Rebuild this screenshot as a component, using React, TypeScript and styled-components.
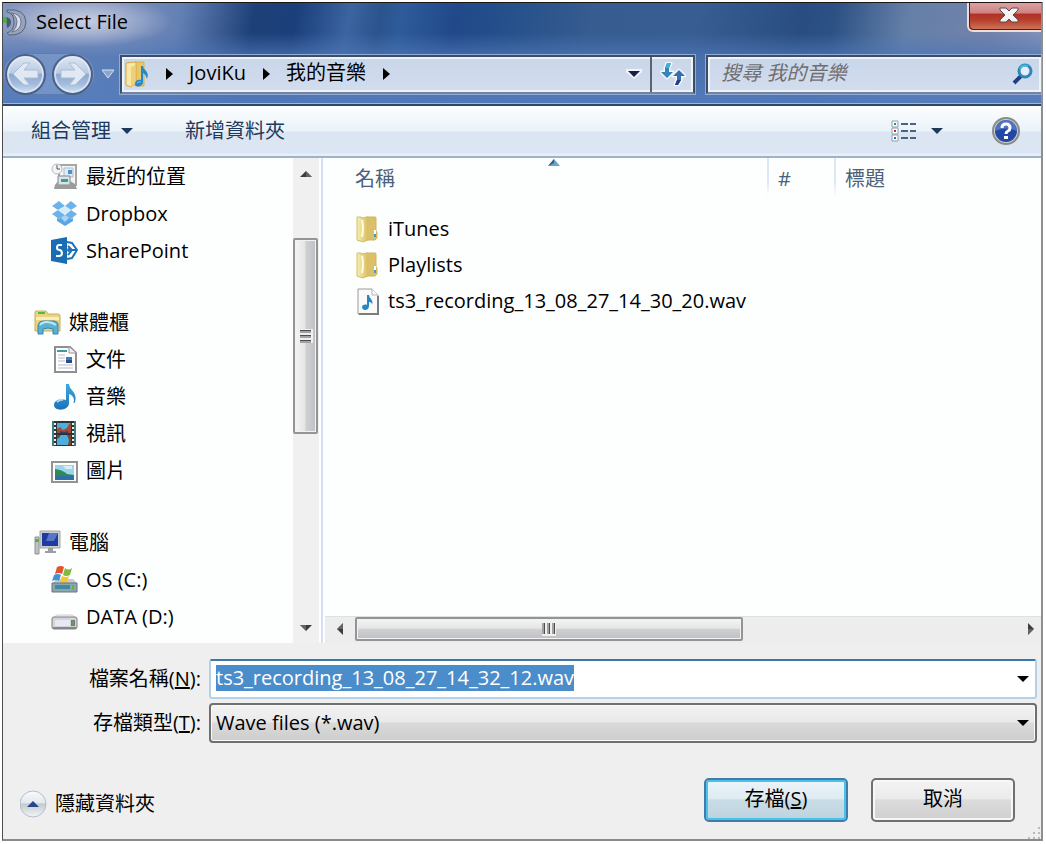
import React, { useEffect, useRef } from "react";
import styled, { createGlobalStyle, css } from "styled-components";

const GlobalStyle = createGlobalStyle`
  *, *::before, *::after { box-sizing: border-box; }
  body { margin: 0; background: #fff; }
  body, button, input, select {
    font-family: "Open Sans", "Noto Sans CJK TC", sans-serif;
    font-size: 20px;
    line-height: 26px;
    color: #000;
  }
  button { padding: 0; border: 0; background: none; cursor: default; }
`;

/* ---------- window frame ---------- */

const Page = styled.div`
  min-height: 100vh;
  display: flex;
  padding: 2px 3px 3px 2px;
`;

const Window = styled.div`
  flex: 1;
  min-width: 0;
  display: flex;
  flex-direction: column;
  border: solid;
  border-width: 1px 2px 2px 1px;
  border-color: #1c1512 #8f8f8f #8a8a8a #4c4c4c;
  background: #efefef;
`;

const Glass = styled.header`
  border-bottom: 2px solid #2d4764;
  padding-bottom: 9px;
  background:
    radial-gradient(ellipse 90px 26px at 80px 18px, rgba(225, 228, 240, 0.75), rgba(190, 200, 225, 0) 100%),
    linear-gradient(180deg, rgba(84, 124, 187, 0) 30px, rgba(78, 118, 182, 0.75) 54px, rgba(84, 124, 187, 0.95) 100%),
    linear-gradient(100deg,
      #8294bd 0, #7f92bc 10%, #6380b4 17%, #1d4078 24%, #1b3f7a 28%, #3b64a1 33%, #2b548d 36%,
      #2e5b9a 38%, #21498a 43%, #25508a 48%, #365c90 56%, #375d92 66%, #294d80 76%, #2c5184 79%,
      #6580a8 86%, #7282aa 94%, #8394bb 100%);
  box-shadow: inset 0 -1px 0 #9db8dd;
`;

const TitleBar = styled.div`
  height: 50px;
  display: flex;
  align-items: flex-start;
  gap: 9px;
`;

const Title = styled.h1`
  flex: 1;
  margin: 5px 0 0;
  font-size: 20px;
  line-height: 28px;
  font-weight: 400;
`;

const AppLogo = styled.svg`
  width: 24px;
  height: 28px;
  margin-top: 5px;
`;

const CloseButton = styled.button`
  width: 74px;
  height: 29px;
  padding: 0 0 4px 8px;
  border: 2px solid #f0dcdc;
  border-top: 0;
  border-right: 0;
  border-radius: 0 0 0 6px;
  background: linear-gradient(#dba3a3 0, #cf8080 38%, #b03025 40%, #b8412f 65%, #d07a5c 100%);
  box-shadow: inset 1px -1px 0 #5c1a1a;
  display: flex;
  justify-content: center;
  align-items: center;
`;

const NavRow = styled.div`
  display: flex;
  align-items: center;
  height: 42px;
`;

const NavButtons = styled.div`
  display: flex;
  align-items: center;
  gap: 6px;
  height: 42px;
  padding: 0 2px;
  border-radius: 21px;
  background: rgba(150, 175, 215, 0.45);
  box-shadow: inset 0 0 0 1px rgba(70, 100, 150, 0.5);
`;

const RoundButton = styled.button`
  width: 41px;
  height: 41px;
  border-radius: 50%;
  border: 2px solid #4a6287;
  background: linear-gradient(#dfe7f2 0, #b9cae2 46%, #8fa9cf 50%, #a2bbdd 75%, #cfe0f2 100%);
  box-shadow: inset 0 0 0 2px rgba(225, 235, 248, 0.75);
  display: flex;
  align-items: center;
  justify-content: center;
`;

const HistoryButton = styled.button`
  width: 25px;
  height: 38px;
  display: flex;
  align-items: center;
  justify-content: center;
`;

const glassBox = css`
  height: 39px;
  display: flex;
  align-items: stretch;
  border: 2px solid #3d4d66;
  border-bottom-color: #74839f;
  background: linear-gradient(#c9d6e9, #d2ddee);
  box-shadow: 0 0 0 1px #8fabd6, inset 0 0 0 2px #eef3fa;
`;

const AddressBar = styled.nav`
  ${glassBox}
  flex: 577;
  min-width: 0;
`;

const Crumbs = styled.div`
  flex: 1;
  min-width: 0;
  display: flex;
  align-items: center;
  padding-left: 3px;
  white-space: nowrap;
`;

const CrumbLink = styled.a`
  color: #000;
  text-decoration: none;
  margin-bottom: 2px;
`;

const CrumbArrow = styled.svg`
  width: 8px;
  height: 12px;
  margin: 0 16px;
  flex: none;
`;

const BarButton = styled.button<{ $width: number; $divided?: boolean }>`
  width: ${(p) => p.$width}px;
  border-left: ${(p) => (p.$divided ? "2px solid #5b6270" : "0")};
  display: flex;
  align-items: center;
  justify-content: center;
`;

const SearchBox = styled.form`
  ${glassBox}
  flex: 336;
  min-width: 0;
  margin-left: 11px;
  border-right-width: 0;
`;

const SearchInput = styled.input`
  flex: 1;
  min-width: 0;
  border: 0;
  outline: 0;
  padding: 0 0 2px 13px;
  background: none;
  &::placeholder {
    color: #6e6e70;
    opacity: 1;
    font-style: italic;
  }
`;

/* ---------- command bar ---------- */

const CommandBar = styled.div`
  height: 52px;
  display: flex;
  align-items: center;
  padding: 0 21px 0 28px;
  border-bottom: 2px solid #a0b1c9;
  background: linear-gradient(#fcfeff 0, #eaf2f9 50%, #dce6f2 52%, #dce6f3 94%, #e4f0f8 96%);
`;

const Command = styled.button<{ $gap?: number }>`
  display: flex;
  align-items: center;
  gap: 8px;
  color: #1e395b;
  margin-right: ${(p) => p.$gap ?? 0}px;
`;

const Spacer = styled.div`
  flex: 1;
`;

/* ---------- body ---------- */

const Body = styled.main`
  flex: 1;
  display: flex;
  min-height: 0;
  background: #fdfefe;
`;

const Sidebar = styled.nav`
  width: 290px;
  flex: none;
`;

const Group = styled.ul`
  list-style: none;
  margin: 0 0 35px;
  padding: 0;
  &:last-child {
    margin-bottom: 0;
  }
`;

const Place = styled.a<{ $root?: boolean }>`
  height: 37px;
  display: flex;
  align-items: center;
  gap: 8px;
  padding-left: ${(p) => (p.$root ? 31 : 48)}px;
  color: #000;
  text-decoration: none;
`;

const Icon = styled.svg`
  width: 27px;
  height: 27px;
  flex: none;
`;

const ScrollTrack = styled.div<{ $horizontal?: boolean }>`
  display: flex;
  flex-direction: ${(p) => (p.$horizontal ? "row" : "column")};
  flex: none;
  background: ${(p) => (p.$horizontal ? "#ededed" : "#f0f0f0")};
  ${(p) =>
    p.$horizontal
      ? "height: 27px; padding-bottom: 2px; border-top: 1px solid #e0e0e0;"
      : "width: 26px; padding-right: 1px;"}
`;

const ScrollArrow = styled.button<{ $size: number }>`
  flex: 0 0 ${(p) => p.$size}px;
  display: flex;
  align-items: center;
  justify-content: center;
`;

const Gap = styled.div<{ $grow: number }>`
  flex: ${(p) => p.$grow} 1 0;
`;

const Thumb = styled.div<{ $grow: number; $horizontal?: boolean }>`
  flex: ${(p) => p.$grow} 1 0;
  border: 2px solid #949494;
  border-radius: 2px;
  box-shadow: inset 0 0 0 1px #f2f2f2;
  display: flex;
  align-items: center;
  justify-content: center;
  background: linear-gradient(
    ${(p) => (p.$horizontal ? "180deg" : "90deg")},
    #f4f4f4 0,
    #e6e6e7 46%,
    #cfd0d2 52%,
    #bfc0c5 100%
  );
`;

const Files = styled.section`
  flex: 1;
  min-width: 0;
  display: flex;
  flex-direction: column;
  border-left: 2px solid #d3e0f3;
  margin-left: 2px;
  padding-left: 2px;
`;

const FileArea = styled.div`
  flex: 1;
  padding-left: 16px;
`;

const FileTable = styled.table`
  width: 100%;
  table-layout: fixed;
  border-collapse: collapse;
`;

const HeadCell = styled.th<{ $width?: number; $first?: boolean }>`
  position: relative;
  width: ${(p) => (p.$width ? `${p.$width}px` : "auto")};
  height: 42px;
  padding: 0 0 0 ${(p) => (p.$first ? 14 : 11)}px;
  font-weight: 400;
  text-align: left;
  color: #4c607a;
  background: ${(p) =>
    p.$first ? "none" : "linear-gradient(#dce6f5, #dce6f5 60%, #fdfefe) 0 0 / 2px 38px no-repeat"};
`;

const SortMark = styled.svg`
  position: absolute;
  top: 1px;
  left: 50%;
  width: 12px;
  height: 7px;
  margin-left: -6px;
`;

const FileCell = styled.td`
  height: 36px;
  padding: 0 0 0 15px;
`;

const FileName = styled.div`
  display: flex;
  align-items: center;
  gap: 5px;
`;

const HeadGap = styled.tr`
  height: 11px;
`;

/* ---------- footer ---------- */

const Footer = styled.footer`
  padding: 16px 4px 17px 0;
`;

const Fields = styled.div`
  display: grid;
  grid-template-columns: 198px 1fr;
  column-gap: 8px;
  row-gap: 4px;
  align-items: center;
`;

const FieldLabel = styled.label`
  text-align: right;
  white-space: nowrap;
`;

const Combo = styled.div`
  height: 40px;
  display: flex;
  border: 2px solid #b5d1e8;
  border-top-color: #3d78ab;
  border-radius: 3px;
  background: #fff;
`;

const NameInput = styled.input`
  flex: 1;
  min-width: 0;
  border: 0;
  outline: 0;
  padding: 0 0 2px 5px;
  background: none;
  &::selection {
    background: #4b8dca;
    color: #fff;
  }
`;

const SelectWrap = styled.div`
  display: grid;
  align-items: center;
  & > * {
    grid-area: 1 / 1;
  }
  & > svg {
    justify-self: end;
    margin-right: 6px;
    pointer-events: none;
  }
`;

const TypeSelect = styled.select`
  appearance: none;
  width: 100%;
  height: 40px;
  padding: 0 28px 0 5px;
  border: 2px solid #6f6f6f;
  border-radius: 4px;
  box-shadow: inset 0 0 0 1px #fafafa;
  background: linear-gradient(#f3f3f3 0, #e9e9e9 47%, #dadada 50%, #cdcdcd 100%);
`;

const ComboButton = styled.button`
  width: 24px;
  display: flex;
  align-items: center;
  justify-content: center;
`;

const Actions = styled.div`
  display: flex;
  align-items: center;
  gap: 23px;
  padding: 35px 22px 0 17px;
`;

const HideFolders = styled.button`
  display: flex;
  align-items: center;
  gap: 8px;
  margin-top: 8px;
`;

const PushButton = styled.button<{ $primary?: boolean }>`
  width: 144px;
  height: 44px;
  padding-bottom: 2px;
  border: 2px solid ${(p) => (p.$primary ? "#3f7cac" : "#707070")};
  border-radius: 5px;
  box-shadow: inset 0 0 0 2px ${(p) => (p.$primary ? "#48c2e6" : "#f7f7f7")};
  background: ${(p) =>
    p.$primary
      ? "linear-gradient(#ecf4f9 0, #dfebf2 46%, #c9dce6 50%, #bdd3df 100%)"
      : "linear-gradient(#f3f3f3 0, #ebebeb 46%, #dcdcdc 50%, #cfcfcf 100%)"};
`;

const Resize = styled.svg`
  position: absolute;
  right: 5px;
  bottom: 5px;
  width: 14px;
  height: 12px;
`;

/* ---------- drawings ---------- */

const Down = ({ fill = "#000", halo = false }: { fill?: string; halo?: boolean }) => (
  <svg width="16" height="10" viewBox="0 0 16 10" aria-hidden="true">
    {halo && <path d="M0 0h16v3l-8 7-8-7z" fill="#f1f5fb" />}
    <path d="M2 2h12l-6 6z" fill={fill} />
  </svg>
);

const ScrollTip = ({ turn }: { turn: number }) => (
  <svg width="12" height="12" viewBox="0 0 12 12" aria-hidden="true">
    <g transform={`rotate(${turn} 6 6)`}>
      <path d="M0 9l6-6 6 6z" fill="#3c3c3c" />
      <path d="M6 3l6 6H6z" fill="#8a8a8a" opacity="0.5" />
    </g>
  </svg>
);

const Grip = ({ vertical }: { vertical?: boolean }) => (
  <svg width="14" height="14" viewBox="0 0 14 14" aria-hidden="true">
    <g transform={vertical ? "rotate(90 7 7)" : undefined}>
      <path d="M0 0h14v14H0z" fill="#f0f0f0" />
      <path d="M1 1h11v3H1zM1 6h11v3H1zM1 11h11v3H1z" fill="#a2a2a2" />
      <path d="M1 1h11v1H1zM1 6h11v1H1zM1 11h11v1H1z" fill="#4e4e4e" />
    </g>
  </svg>
);

const NavArrow = ({ flip }: { flip?: boolean }) => (
  <svg width="30" height="26" viewBox="0 0 30 26" aria-hidden="true">
    <path
      transform={flip ? "matrix(-1 0 0 1 30 0)" : undefined}
      d="M2 13L13 2h6l-6 7h14v8H13l6 7h-6z"
      fill="#dfe8f3"
      stroke="#a9bcd8"
    />
  </svg>
);

const FolderIcon = () => (
  <Icon viewBox="0 0 27 27" aria-hidden="true">
    <defs>
      <linearGradient id="fold" x1="0" x2="1">
        <stop offset="0" stopColor="#f8f0b4" />
        <stop offset="1" stopColor="#d9bd5f" />
      </linearGradient>
    </defs>
    <path d="M10 1h9q1 0 1 1v13l1 1v6l-2 2h-9z" fill="#dcc069" stroke="#d0b55c" />
    <path d="M1 1h6v24H1z" fill="#ecdc8c" />
    <path d="M5 2l7-1v23l-5 2-6-2V1h4z" fill="url(#fold)" stroke="#d6be68" />
    <path d="M6 4q2 8 0 17" fill="none" stroke="#fffbe0" strokeWidth="2" />
    <path d="M18 14h2v6h-2z" fill="#fff" />
    <path d="M18 18h2v3h-2z" fill="#3c9bd3" />
  </Icon>
);

const MusicFolder = () => (
  <svg width="24" height="27" viewBox="0 0 24 27" aria-hidden="true">
    <path d="M10 1h9v24h-9z" fill="#e9c765" stroke="#d8b04c" />
    <path d="M1 2l10-1v21l-5 4-5-2z" fill="#fae7a2" stroke="#cfa848" />
    <path d="M6 6l4-2v18l-4 4z" fill="#eed07c" />
    <path d="M18 5c0 4 7 5 4 13-1-3-2-5-4-6v9c0 5-8 6-8 2 0-4 4-5 6-4V5z" fill="#2788c9" />
    <path d="M12 22q2-2 4-1" fill="none" stroke="#7cc6ee" />
  </svg>
);

const AudioFile = () => (
  <Icon viewBox="0 0 27 27" aria-hidden="true">
    <path d="M2 1h14l6 6v19H2z" fill="#fafafa" stroke="#9a9a9a" />
    <path d="M3 26h19V8" fill="none" stroke="#7c7c7c" strokeWidth="2" />
    <path d="M16 1v6h6" fill="#fff" stroke="#b5b5b5" />
    <path d="M13 7c0 3 5 5 3 10 0-2-1-3-3-3v4c0 5-7 5-7 1 0-2 3-3 5-2V7z" fill="#2687c4" />
  </Icon>
);

const RecentIcon = () => (
  <Icon viewBox="0 0 27 27" aria-hidden="true">
    <path d="M8 2h17v20H8z" fill="#f4f4f4" stroke="#a6a6a6" strokeWidth="2" />
    <path d="M13 5h9v9h-9z" fill="#dcecf8" stroke="#aebdca" />
    <path d="M17 7h4v4h-4z" fill="#4a8fd0" />
    <path d="M7 13h12v9H7z" fill="#d7e5ea" stroke="#888" />
    <path d="M10 16h7v3h-7z" fill="#3b9c98" />
    <path d="M4 22l3-4v4h12v-4l5 3 2 5H3z" fill="#9b9b9b" />
    <circle cx="6" cy="6" r="5" fill="#f2f5f8" stroke="#b2bac2" />
    <path d="M6 2v4h3" fill="none" stroke="#555" />
  </Icon>
);

const DropboxIcon = () => (
  <Icon viewBox="0 0 27 27" aria-hidden="true">
    <path d="M8 1l6 5-7 4-6-4zM20 1l6 5-6 4-6-4zM7 10l7 5-6 4-7-5zM20 10l6 4-6 5-6-4z" fill="#6db3ea" />
    <path d="M14 6l6 4-6 5-7-5z" fill="#d6ecfb" />
    <path d="M6 18l2 1 6-4 6 4 2-1v3l-8 5-8-5z" fill="#5aa5e2" />
    <path d="M14 15l4 3-4 4-4-4z" fill="#a9d5f5" />
  </Icon>
);

const SharePointIcon = () => (
  <Icon viewBox="0 0 27 27" aria-hidden="true">
    <path d="M16 5l5 1 5 7-5 8-5 1" fill="#fff" stroke="#1f72b8" strokeWidth="2" />
    <path d="M17 9l4 4-4 5M18 13h7" fill="none" stroke="#1f72b8" strokeWidth="2" />
    <circle cx="18" cy="13" r="2" fill="#1f72b8" />
    <path d="M0 3L16 0v27L0 24z" fill="#1a6cb4" />
    <path d="M11 8H8q-2 0-2 3 0 2 3 2 2 1 2 3 0 3-3 3H5" fill="none" stroke="#fff" strokeWidth="2" />
  </Icon>
);

const LibraryIcon = () => (
  <Icon viewBox="0 0 27 27" aria-hidden="true">
    <path d="M1 3q0-1 1-1h10l2 3h10q2 0 2 2v15H1z" fill="#e9d485" stroke="#c9ae58" />
    <path d="M2 8h23v3H2z" fill="#f8eeb8" />
    <path d="M4 3h7v2H4z" fill="#5bb83d" />
    <path d="M4 25V16q1-4 5-4h10q5 0 5 4v9h-5v-5q-5-2-10 0v5z" fill="#58b1d8" stroke="#3385ad" />
    <path d="M6 16q2-3 7-3t9 3" fill="none" stroke="#c3e8f5" strokeWidth="2" />
  </Icon>
);

const DocumentIcon = () => (
  <Icon viewBox="0 0 27 27" aria-hidden="true">
    <path d="M4 1h15l6 6v19H4z" fill="#fff" stroke="#8f8f8f" strokeWidth="2" />
    <path d="M18 1v6h7" fill="#eee" stroke="#999" />
    <path d="M6 4h10v2H6z" fill="#3d9ba0" />
    <path d="M7 9h7M7 12h7M7 15h7M7 19h15M7 22h15" stroke="#b4b8d2" />
    <path d="M15 11h6v6h-6z" fill="#3c7dbf" />
    <path d="M15 14h6v3h-6z" fill="#244c7c" />
  </Icon>
);

const NoteIcon = () => (
  <Icon viewBox="0 0 27 27" aria-hidden="true">
    <defs>
      <linearGradient id="note" x1="0" x2="0" y1="0" y2="1">
        <stop offset="0" stopColor="#3fa9e0" />
        <stop offset="1" stopColor="#1c72b8" />
      </linearGradient>
    </defs>
    <path d="M15 1h3c0 6 9 8 6 18-1 2-2 1-1-1 0-4-2-6-5-7v9c0 8-15 9-15 2 0-5 7-7 12-5z" fill="url(#note)" />
    <path d="M6 19q3-3 6-2" stroke="#a5dcf5" strokeWidth="2" fill="none" />
  </Icon>
);

const VideoIcon = () => (
  <Icon viewBox="0 0 27 27" aria-hidden="true">
    <path d="M1 1h24v25H1z" fill="#2c3436" />
    <path d="M1 1h2v25H1zM23 1h2v25h-2z" fill="#3a7d80" />
    <path d="M4 3v22M22 3v22" stroke="#e9eeee" strokeWidth="2" strokeDasharray="2 2" />
    <path d="M6 3h14v10H6zM6 15h14v10H6z" fill="#4aaede" />
    <path d="M6 9l3-2 3 3 4-2 2-4 2-1v10H6z" fill="#a14b38" />
    <path d="M9 11l4 1 4-1v2H9z" fill="#3a3f66" />
    <path d="M6 15h4l-2 3-2 1zM16 15h4v10h-3l1-5z" fill="#7d4433" />
  </Icon>
);

const PictureIcon = () => (
  <Icon viewBox="0 0 27 27" aria-hidden="true">
    <path d="M1 5h25v20H1z" fill="#fdfdfd" stroke="#939393" strokeWidth="2" />
    <path d="M4 8h19v15H4z" fill="#9cd3ee" />
    <path d="M4 12q8 1 12 5l7 1v2H4z" fill="#2f8a52" />
    <path d="M4 19h19v4H4z" fill="#2e6fa8" />
    <path d="M12 9h9v3h-6z" fill="#d8effa" />
  </Icon>
);

const ComputerIcon = () => (
  <Icon viewBox="0 0 27 27" aria-hidden="true">
    <path d="M1 8h4v17H1z" fill="#bfc3c7" stroke="#8e9296" />
    <path d="M1 10h4v3H1z" fill="#55b046" />
    <path d="M6 2h20v17H6z" fill="#c9cccf" stroke="#a4a7aa" />
    <path d="M8 4h16v13H8z" fill="#1f3aa0" />
    <path d="M15 4h9l-4 8h-8z" fill="#6f8edb" opacity="0.7" />
    <path d="M14 19h5v3h3v2H11v-2h3z" fill="#9c9fa2" />
  </Icon>
);

const DriveIcon = ({ system }: { system?: boolean }) => (
  <Icon viewBox="0 0 27 27" aria-hidden="true">
    {system ? (
      <>
        <path d="M2 17l3-4h17l4 4z" fill="#c2cdd3" />
        <path d="M6 1q4-2 7 0l-2 7q-3-2-7 0z" fill="#e5532c" />
        <path d="M14 2q3 3 7 0l-2 7q-4 2-7 0z" fill="#7fbb3e" />
        <path d="M3 9q4-2 7 0l-2 6q-3-2-7 0z" fill="#3f94d8" />
        <path d="M11 10q4 2 7 0l-2 6q-4 2-7 0z" fill="#f6c52f" />
        <path d="M1 17h25v9H1z" fill="#8da6ae" stroke="#6a757a" />
        <path d="M4 19h15v4H4z" fill="#3e8aa0" />
        <path d="M21 19h2v5h-2z" fill="#4fc03e" />
      </>
    ) : (
      <>
        <path d="M2 15l4-3h15l4 3z" fill="#f1f1f3" stroke="#cfd0d3" />
        <rect x="1" y="14" width="25" height="12" rx="2" fill="#d3d4d9" stroke="#808186" />
        <path d="M2 24h23v2H2z" fill="#85868b" />
        <path d="M4 17h15v6H4z" fill="#e8e8f5" />
        <path d="M20 17h4v6h-4z" fill="#77787c" />
        <path d="M21 18h2v4h-2z" fill="#56a844" />
      </>
    )}
  </Icon>
);

/* ---------- data ---------- */

type PlaceItem = { label: string; icon: React.ReactNode; root?: boolean };

const groups: PlaceItem[][] = [
  [
    { label: "最近的位置", icon: <RecentIcon /> },
    { label: "Dropbox", icon: <DropboxIcon /> },
    { label: "SharePoint", icon: <SharePointIcon /> },
  ],
  [
    { label: "媒體櫃", icon: <LibraryIcon />, root: true },
    { label: "文件", icon: <DocumentIcon /> },
    { label: "音樂", icon: <NoteIcon /> },
    { label: "視訊", icon: <VideoIcon /> },
    { label: "圖片", icon: <PictureIcon /> },
  ],
  [
    { label: "電腦", icon: <ComputerIcon />, root: true },
    { label: "OS (C:)", icon: <DriveIcon system /> },
    { label: "DATA (D:)", icon: <DriveIcon /> },
  ],
];

const files = [
  { name: "iTunes", icon: <FolderIcon /> },
  { name: "Playlists", icon: <FolderIcon /> },
  { name: "ts3_recording_13_08_27_14_30_20.wav", icon: <AudioFile /> },
];

const Chevron = () => (
  <CrumbArrow viewBox="0 0 8 12" aria-hidden="true">
    <path d="M1 0l7 6-7 6z" fill="#000" />
  </CrumbArrow>
);

export default function App() {
  const nameRef = useRef<HTMLInputElement>(null);

  useEffect(() => {
    nameRef.current?.focus();
    nameRef.current?.select();
  }, []);

  return (
    <Page>
      <GlobalStyle />
      <Window>
        <Glass>
          <TitleBar>
            <AppLogo viewBox="0 0 24 28" aria-hidden="true">
              <path d="M4 2q18-2 19 12-1 14-17 13l-2-2q7-2 7-11T4 4z" fill="#98a3ba" stroke="#56627c" />
              <path d="M8 5q10 1 10 9T9 24q5-4 5-10T8 5z" fill="#d9deea" stroke="#6b7690" />
              <path d="M3 9q5 1 5 5t-4 6z" fill="#4c5870" />
              <circle cx="1" cy="12" r="3" fill="#45b33c" />
            </AppLogo>
            <Title>Select File</Title>
            <CloseButton aria-label="關閉">
              <svg width="20" height="18" viewBox="0 0 20 18" aria-hidden="true">
                <path
                  d="M1 2h6l3 3 3-3h6v2l-5 5 5 5v2h-6l-3-3-3 3H1v-2l5-5-5-5z"
                  fill="#f4f4f4"
                  stroke="#5a4a55"
                />
              </svg>
            </CloseButton>
          </TitleBar>
          <NavRow>
            <NavButtons>
              <RoundButton aria-label="上一頁">
                <NavArrow />
              </RoundButton>
              <RoundButton aria-label="下一頁">
                <NavArrow flip />
              </RoundButton>
            </NavButtons>
            <HistoryButton aria-label="最近的頁面">
              <svg width="14" height="10" viewBox="0 0 14 10" aria-hidden="true">
                <path d="M1 1h12L7 9z" fill="#8ba4cd" stroke="#d5e0f0" />
              </svg>
            </HistoryButton>
            <AddressBar aria-label="路徑">
              <Crumbs>
                <MusicFolder />
                <Chevron />
                <CrumbLink href="#joviku">JoviKu</CrumbLink>
                <Chevron />
                <CrumbLink href="#music">我的音樂</CrumbLink>
                <Chevron />
              </Crumbs>
              <BarButton $width={32} aria-label="先前的位置">
                <Down fill="#141f4d" halo />
              </BarButton>
              <BarButton $width={43} aria-label="重新整理" $divided>
                <svg width="26" height="24" viewBox="0 0 26 24" aria-hidden="true">
                  <g stroke="#f3f7fc" strokeWidth="3" strokeLinejoin="round">
                    <path d="M7 1h4l-2 5v4h4l-6 6-6-6h4V6z" />
                    <path d="M19 8l6 6h-4v4l-3 5h-3l2-5v-4h-4z" />
                  </g>
                  <path d="M7 1h4l-2 5v4h4l-6 6-6-6h4V6z" fill="#3585bd" />
                  <path d="M7 1h4l-2 5H5z" fill="#3fb0cf" />
                  <path d="M19 8l6 6h-4v4l-3 5h-3l2-5v-4h-4z" fill="#376eb0" />
                  <path d="M17 18h4l-3 5h-3z" fill="#1f3f80" />
                </svg>
              </BarButton>
            </AddressBar>
            <SearchBox onSubmit={(e) => e.preventDefault()}>
              <SearchInput aria-label="搜尋" placeholder="搜尋 我的音樂" />
              <BarButton $width={36} aria-label="搜尋">
                <svg width="22" height="22" viewBox="0 0 22 22" aria-hidden="true">
                  <path d="M9 13l-7 7" stroke="#1f4088" strokeWidth="4" />
                  <circle cx="13" cy="8" r="6" fill="#e4eef8" stroke="#2f86bd" strokeWidth="3" />
                  <path d="M8 6q2-5 8-3" stroke="#45bcd8" strokeWidth="2" fill="none" />
                </svg>
              </BarButton>
            </SearchBox>
          </NavRow>
        </Glass>

        <CommandBar>
          <Command $gap={50}>
            組合管理
            <Down fill="#1e395b" />
          </Command>
          <Command>新增資料夾</Command>
          <Spacer />
          <Command $gap={47} aria-label="變更檢視">
            <svg width="34" height="22" viewBox="0 0 34 22" aria-hidden="true">
              <path d="M5 1h6v6H5zM5 8h6v6H5zM5 15h6v6H5z" fill="#fff" stroke="#8ea0b4" />
              <path d="M7 3h2v2H7z" fill="#3f8f4a" />
              <path d="M7 10h2v2H7z" fill="#d02525" />
              <path d="M7 17h2v2H7z" fill="#2c62c4" />
              <path d="M14 4h7M23 4h6M14 11h7M23 11h6M14 18h7M23 18h6" stroke="#4c6480" strokeWidth="2" />
            </svg>
            <Down fill="#1e395b" />
          </Command>
          <Command aria-label="說明">
            <svg width="28" height="28" viewBox="0 0 28 28" aria-hidden="true">
              <circle cx="14" cy="14" r="13" fill="#cfcfcf" stroke="#8b8b8b" strokeWidth="2" />
              <circle cx="14" cy="14" r="11" fill="#2348a4" />
              <path d="M3 14a11 11 0 0122 0q-10-5-22 0z" fill="#6f8fd4" opacity="0.6" />
              <path d="M10 11q0-4 4-4t4 4q0 2-2 3t-2 3" fill="none" stroke="#fff" strokeWidth="3" />
              <path d="M12 19h4v3h-4z" fill="#fff" />
            </svg>
          </Command>
        </CommandBar>

        <Body>
          <Sidebar aria-label="位置">
            {groups.map((group, i) => (
              <Group key={i}>
                {group.map((p) => (
                  <li key={p.label}>
                    <Place href="#place" $root={p.root}>
                      {p.icon}
                      {p.label}
                    </Place>
                  </li>
                ))}
              </Group>
            ))}
          </Sidebar>
          <ScrollTrack>
            <ScrollArrow $size={32} aria-label="向上捲動">
              <ScrollTip turn={0} />
            </ScrollArrow>
            <Gap $grow={48} />
            <Thumb $grow={194}>
              <Grip />
            </Thumb>
            <Gap $grow={181} />
            <ScrollArrow $size={30} aria-label="向下捲動">
              <ScrollTip turn={180} />
            </ScrollArrow>
          </ScrollTrack>

          <Files>
            <FileArea>
              <FileTable>
                <thead>
                  <tr>
                    <HeadCell $width={426} $first>
                      名稱
                      <SortMark viewBox="0 0 12 7" aria-hidden="true">
                        <path d="M6 0l6 7H0z" fill="#68a5c2" />
                        <path d="M6 0v4L0 7z" fill="#2f5f7c" />
                      </SortMark>
                    </HeadCell>
                    <HeadCell $width={67}>#</HeadCell>
                    <HeadCell>標題</HeadCell>
                  </tr>
                </thead>
                <tbody>
                  <HeadGap aria-hidden="true" />
                  {files.map((f) => (
                    <tr key={f.name}>
                      <FileCell>
                        <FileName>
                          {f.icon}
                          {f.name}
                        </FileName>
                      </FileCell>
                      <td />
                      <td />
                    </tr>
                  ))}
                </tbody>
              </FileTable>
            </FileArea>
            <ScrollTrack $horizontal>
              <ScrollArrow $size={30} aria-label="向左捲動">
                <ScrollTip turn={-90} />
              </ScrollArrow>
              <Thumb $grow={386} $horizontal>
                <Grip vertical />
              </Thumb>
              <Gap $grow={280} />
              <ScrollArrow $size={20} aria-label="向右捲動">
                <ScrollTip turn={90} />
              </ScrollArrow>
            </ScrollTrack>
          </Files>
        </Body>

        <Footer>
          <Fields>
            <FieldLabel htmlFor="file-name">
              檔案名稱(<u>N</u>):
            </FieldLabel>
            <Combo>
              <NameInput id="file-name" ref={nameRef} defaultValue="ts3_recording_13_08_27_14_32_12.wav" />
              <ComboButton aria-label="檔案名稱清單">
                <Down />
              </ComboButton>
            </Combo>
            <FieldLabel htmlFor="file-type">
              存檔類型(<u>T</u>):
            </FieldLabel>
            <SelectWrap>
              <TypeSelect id="file-type" defaultValue="wav">
                <option value="wav">Wave files (*.wav)</option>
              </TypeSelect>
              <Down />
            </SelectWrap>
          </Fields>
          <Actions>
            <HideFolders>
              <svg width="27" height="28" viewBox="0 0 27 28" aria-hidden="true">
                <defs>
                  <linearGradient id="orb" x1="0" x2="0" y1="0" y2="1">
                    <stop offset="0" stopColor="#f8fafd" />
                    <stop offset="0.45" stopColor="#e4e9ee" />
                    <stop offset="0.5" stopColor="#c3ccca" />
                    <stop offset="1" stopColor="#f3f5f8" />
                  </linearGradient>
                </defs>
                <circle cx="13" cy="14" r="13" fill="url(#orb)" stroke="#b4bdd2" />
                <path d="M7 17l6-6 6 6z" fill="#27458c" />
              </svg>
              隱藏資料夾
            </HideFolders>
            <Spacer />
            <PushButton $primary>
              存檔(<u>S</u>)
            </PushButton>
            <PushButton>取消</PushButton>
          </Actions>
        </Footer>
        <Resize viewBox="0 0 14 12" aria-hidden="true">
          <path
            d="M11 0h2v2h-2zM6 5h2v2H6zM11 5h2v2h-2zM1 10h2v2H1zM6 10h2v2H6zM11 10h2v2h-2z"
            fill="#b9b9b9"
          />
        </Resize>
      </Window>
    </Page>
  );
}
